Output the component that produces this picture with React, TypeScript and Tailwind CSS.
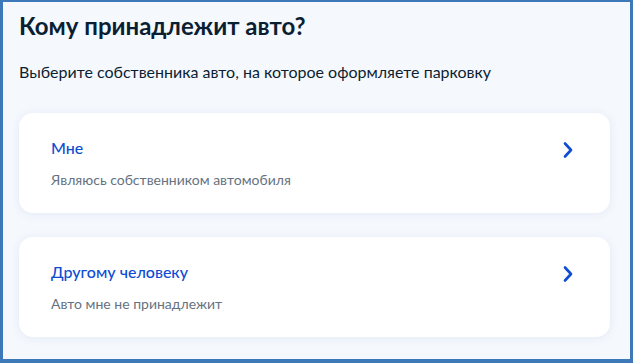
import React from "react";

function Chevron() {
  return (
    <svg width="12" height="18" viewBox="0 0 12 18" fill="none">
      <path d="M3 2.5 L9 9 L3 15.5" stroke="#0d4cd3" strokeWidth="2.6" strokeLinecap="round" strokeLinejoin="round" />
    </svg>
  );
}

function Card({ title, sub }: { title: string; sub: string }) {
  return (
    <div className="flex h-[100px] items-start justify-between rounded-[14px] bg-white pl-[32px] pr-[36px] pt-[25px] shadow-[0_1px_8px_rgba(95,130,190,0.12)]">
      <div className="flex flex-col">
        <div className="text-[16px] font-medium leading-[20px] text-[#0d4cd3]">{title}</div>
        <div className="mt-[13px] text-[14px] leading-[18px] text-[#66727f]">{sub}</div>
      </div>
      <div className="mt-[3px]">
        <Chevron />
      </div>
    </div>
  );
}

export default function App() {
  return (
    <div
      className="h-[363px] w-[633px] border-b-[4px] border-l-[3px] border-r-[3px] border-t-[2px] border-[#3d78b8] bg-[#f5f8fd]"
      style={{ fontFamily: "Lato, 'Noto Sans', sans-serif" }}
    >
      <div className="flex flex-col pl-[16px] pr-[20px]">
        <h1 className="mt-[9px] text-[24px] font-bold leading-[30px] text-[#0b1f33]">Кому принадлежит авто?</h1>
        <p className="mt-[20px] text-[16px] leading-[22px] text-[#0b1f33]">
          Выберите собственника авто, на которое оформляете парковку
        </p>
        <div className="mt-[30px] flex flex-col gap-[24px]">
          <Card title="Мне" sub="Являюсь собственником автомобиля" />
          <Card title="Другому человеку" sub="Авто мне не принадлежит" />
        </div>
      </div>
    </div>
  );
}
